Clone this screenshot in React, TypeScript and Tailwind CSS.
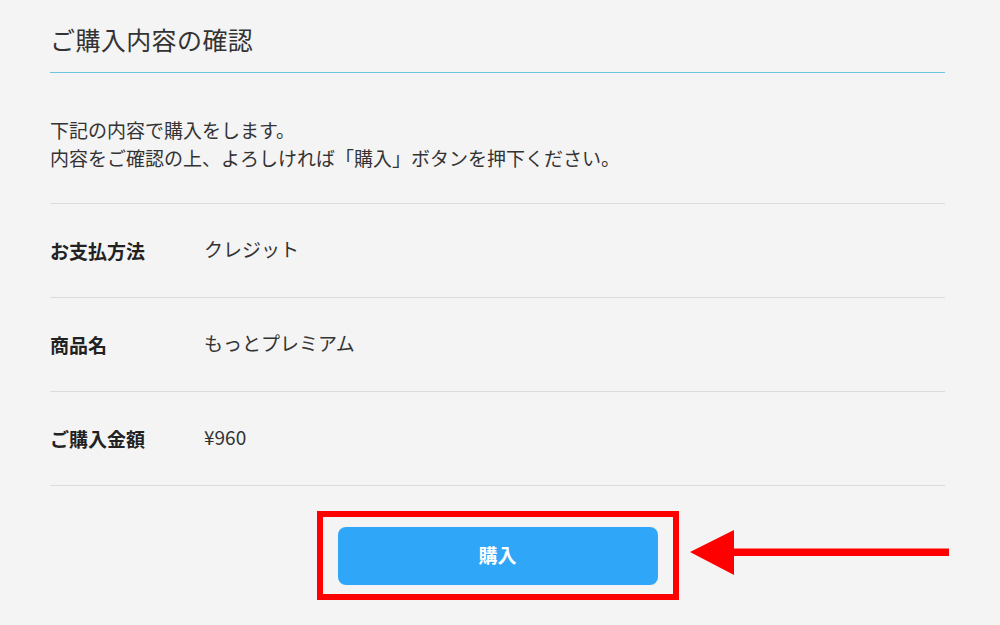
import React from 'react'

const rows = [
  { label: 'お支払方法', value: 'クレジット' },
  { label: '商品名', value: 'もっとプレミアム' },
  { label: 'ご購入金額', value: '¥960' },
]

function Arrow() {
  return (
    <svg
      className="absolute left-[calc(100%+17px)] top-[13px]"
      width="260"
      height="46"
      viewBox="0 0 260 46"
    >
      <polygon points="0,22 44,0 44,45" fill="#ff0000" />
      <rect x="43" y="18.5" width="216" height="7.5" fill="#ff0000" />
    </svg>
  )
}

export default function App() {
  return (
    <div className="w-[1000px] h-[625px] overflow-hidden bg-[#f4f4f4] text-[#333] font-['Noto_Sans_CJK_JP',sans-serif]">
      <div className="pl-[50px] pr-[55px]">
        {/* title */}
        <h1 className="pt-[21px] pb-[15px] text-[25px] leading-[36px] font-normal border-b border-[#6cc5de] tracking-[0.4px]">
          ご購入内容の確認
        </h1>

        {/* lead text */}
        <p className="mt-[43px] text-[19px] leading-[28px]">
          下記の内容で購入をします。
          <br />
          内容をご確認の上、よろしければ「購入」ボタンを押下ください。
        </p>

        {/* details */}
        <div className="mt-[31px] border-t border-[#dcdcdc]">
          {rows.map((row) => (
            <div
              key={row.label}
              className="h-[94px] flex items-center border-b border-[#dcdcdc] text-[19px]"
            >
              <div className="w-[154px] font-bold text-[#222] pt-[2px]">{row.label}</div>
              <div className="-mt-[3px]">{row.value}</div>
            </div>
          ))}
        </div>

        {/* purchase */}
        <div className="flex justify-center mt-[25px]">
          <div className="relative border-[6px] border-[#ff0000] px-[15px] pt-[10px] pb-[9px]">
            <button className="w-[320px] h-[58px] rounded-[8px] bg-[#2fa6f7] text-white text-[19px] font-bold pb-[2px]">
              購入
            </button>
            <Arrow />
          </div>
        </div>
      </div>
    </div>
  )
}
